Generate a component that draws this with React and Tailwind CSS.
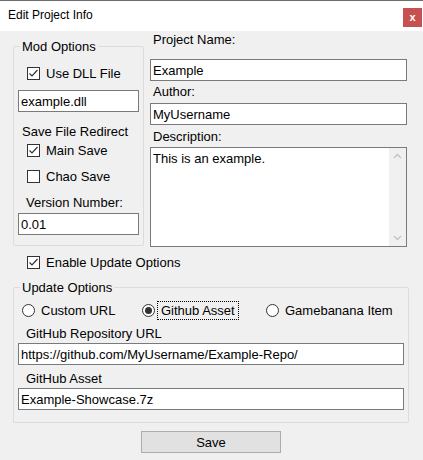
import React from 'react';

const font = { fontFamily: '"Liberation Sans", Arial, sans-serif' };

const Check = ({ checked }) => (
  <span className="w-[13px] h-[13px] border border-[#333333] bg-white flex items-center justify-center shrink-0">
    {checked && (
      <svg width="11" height="11" viewBox="0 0 11 11">
        <polyline points="1.5,5.5 4,8 9.5,2" fill="none" stroke="#333333" strokeWidth="1.2" />
      </svg>
    )}
  </span>
);

const CheckRow = ({ checked, label, className = '' }) => (
  <div className={`flex items-center h-[13px] ${className}`}>
    <Check checked={checked} />
    <span className="ml-[6px] text-[13px] leading-[15px]">{label}</span>
  </div>
);

const Radio = ({ selected, label, focused, className = '' }) => (
  <div className={`flex items-center h-[19px] ${className}`}>
    <span className="w-[13px] h-[13px] rounded-full border border-[#333333] bg-white flex items-center justify-center shrink-0">
      {selected && <span className="w-[7px] h-[7px] rounded-full bg-[#333333]" />}
    </span>
    <span
      className={`ml-[2px] h-[19px] px-[3px] flex items-center border border-dotted text-[13px] leading-[15px] ${
        focused ? 'border-black' : 'border-transparent'
      }`}
    >
      {label}
    </span>
  </div>
);

const TextBox = ({ value, className = '' }) => (
  <div className={`h-[22px] border border-[#7a7a7a] bg-white flex items-center pl-[2px] text-[13px] leading-[15px] ${className}`}>
    {value}
  </div>
);

const Label = ({ children, className = '' }) => (
  <div className={`text-[13px] leading-[15px] h-[15px] ${className}`}>{children}</div>
);

const GroupBox = ({ title, className = '', children }) => (
  <div className={`relative border border-[#dcdcdc] rounded-[2px] ${className}`}>
    {/* caption sits over the top border */}
    <span className="absolute -top-[8px] left-[6px] px-[2px] bg-[#f0f0f0] text-[13px] leading-[15px]">
      {title}
    </span>
    {children}
  </div>
);

export default function App() {
  return (
    <div className="w-[423px] h-[460px] bg-[#f0f0f0] border-t border-[#6d6d6d] text-black overflow-hidden" style={font}>
      {/* Title bar */}
      <div className="h-[30px] bg-white flex items-start">
        <div className="ml-[8px] mt-[7px] text-[12px] leading-[15px]">Edit Project Info</div>
        <div className="ml-auto mr-[1px] mt-[7px] w-[19px] h-[19px] bg-[#c75050] flex items-center justify-center">
          <span className="text-white text-[11px] font-bold leading-none -mt-[1px]">x</span>
        </div>
      </div>

      {/* Top section */}
      <div className="flex items-start">
        <GroupBox title="Mod Options" className="ml-[13px] mt-[15px] w-[131px] h-[200px]">
          <div className="flex flex-col">
            <CheckRow checked label="Use DLL File" className="mt-[20px] ml-[13px]" />
            <TextBox value="example.dll" className="mt-[10px] ml-[4px] w-[121px]" />
            <Label className="mt-[12px] ml-[8px]">Save File Redirect</Label>
            <CheckRow checked label="Main Save" className="mt-[5px] ml-[13px]" />
            <CheckRow label="Chao Save" className="mt-[13px] ml-[13px]" />
            <Label className="mt-[12px] ml-[12px]">Version Number:</Label>
            <TextBox value="0.01" className="mt-[3px] ml-[4px] w-[121px]" />
          </div>
        </GroupBox>

        <div className="ml-[6px] w-[257px] flex flex-col">
          <Label className="ml-[3px] mt-[1px]">Project Name:</Label>
          <TextBox value="Example" className="mt-[12px]" />
          <Label className="ml-[3px] mt-[3px]">Author:</Label>
          <TextBox value="MyUsername" className="mt-[4px]" />
          <Label className="ml-[3px] mt-[4px]">Description:</Label>
          <div className="mt-[3px] h-[100px] border border-[#7a7a7a] bg-white flex">
            <div className="flex-1 pl-[2px] pt-[3px] text-[13px] leading-[15px]">This is an example.</div>
            <div className="w-[17px] bg-[#f0f0f0] flex flex-col justify-between items-center py-[5px]">
              <svg width="9" height="6" viewBox="0 0 9 6">
                <polyline points="1,5 4.5,1.5 8,5" fill="none" stroke="#c2c2c2" strokeWidth="1.3" />
              </svg>
              <svg width="9" height="6" viewBox="0 0 9 6">
                <polyline points="1,1 4.5,4.5 8,1" fill="none" stroke="#c2c2c2" strokeWidth="1.3" />
              </svg>
            </div>
          </div>
        </div>
      </div>

      <CheckRow checked label="Enable Update Options" className="mt-[9px] ml-[27px]" />

      <GroupBox title="Update Options" className="ml-[13px] mt-[18px] w-[396px] h-[136px]">
        <div className="flex flex-col">
          <div className="flex mt-[13px] ml-[8px]">
            <Radio label="Custom URL" className="w-[120px]" />
            <Radio selected focused label="Github Asset" className="w-[124px]" />
            <Radio label="Gamebanana Item" />
          </div>
          <Label className="mt-[6px] ml-[12px]">GitHub Repository URL</Label>
          <TextBox value="https://github.com/MyUsername/Example-Repo/" className="mt-[2px] ml-[4px] w-[386px]" />
          <Label className="mt-[6px] ml-[12px]">GitHub Asset</Label>
          <TextBox value="Example-Showcase.7z" className="mt-[2px] ml-[4px] w-[386px]" />
        </div>
      </GroupBox>

      <div className="mt-[8px] ml-[141px] w-[140px] h-[22px] bg-[#e1e1e1] border border-[#adadad] flex items-center justify-center text-[13px] leading-[15px]">
        Save
      </div>
    </div>
  );
}
